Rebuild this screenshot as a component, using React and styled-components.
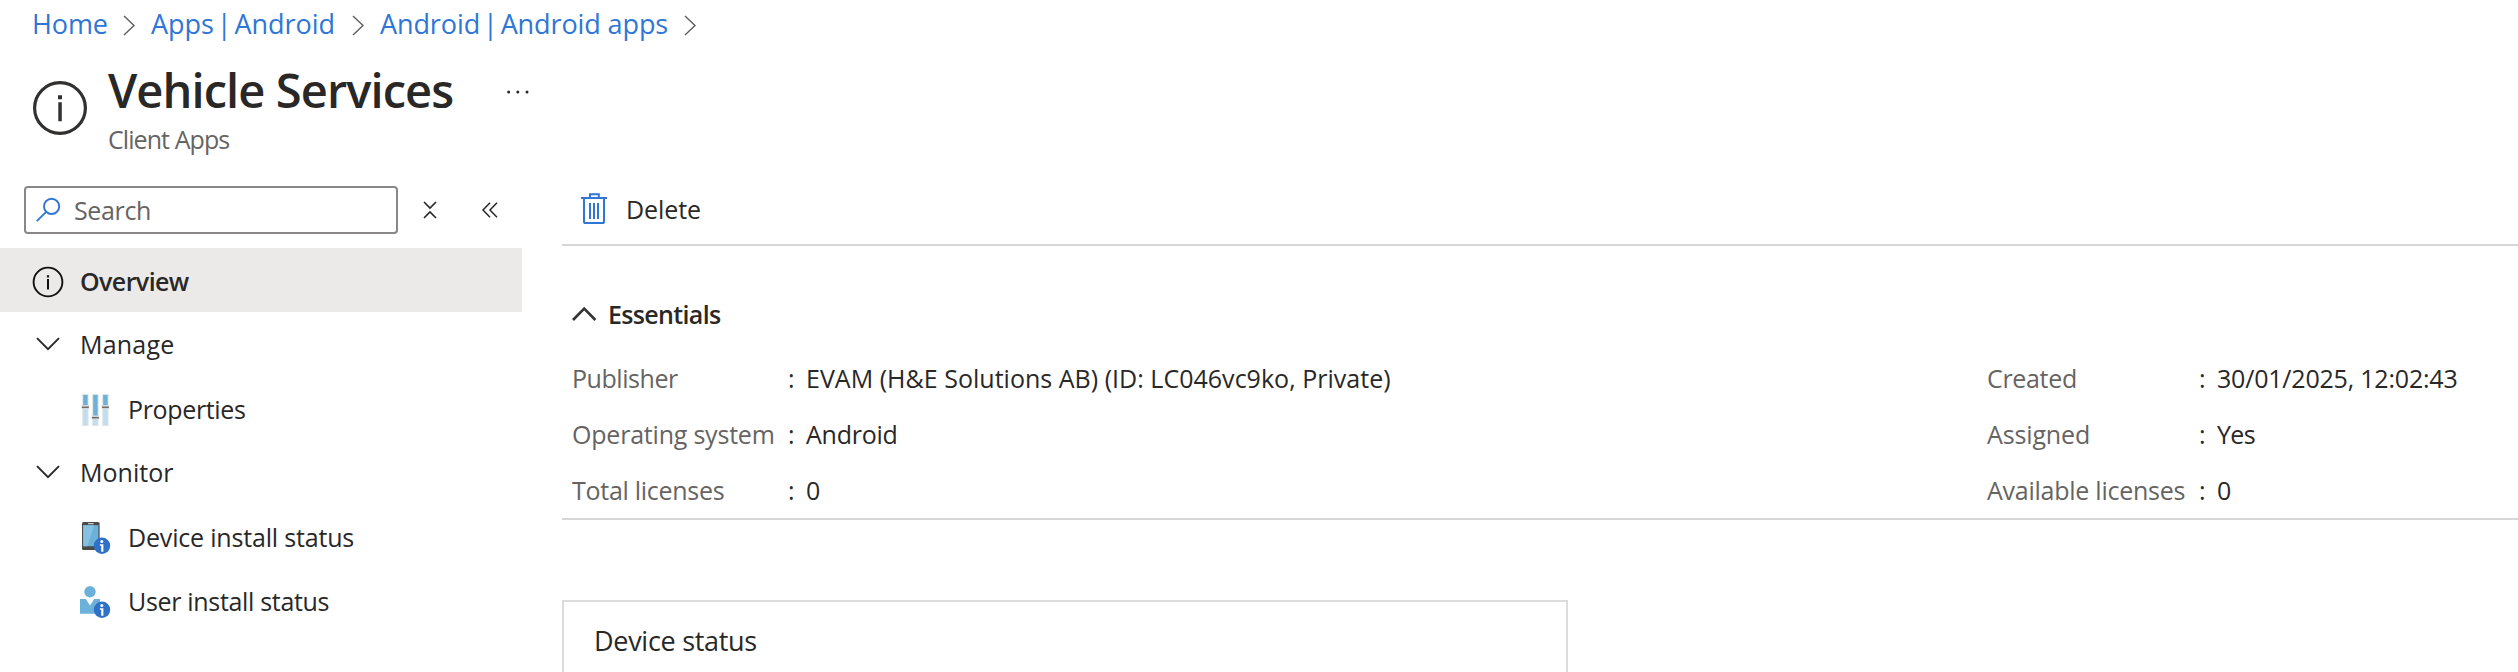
import React from "react";
import styled, { createGlobalStyle } from "styled-components";

const color = {
  text: "#292827",
  label: "#666462",
  link: "#2f76d6",
  line: "#d6d6d6",
  cardLine: "#dcdcdc",
  selected: "#ebeae9",
  azure: "#6bb1da",
  badge: "#2f70c8",
};

const GlobalStyle = createGlobalStyle`
  html, body { margin: 0; background: #fff; overflow: hidden; }
  * { box-sizing: border-box; }
  body {
    font-family: "Open Sans", "Noto Sans", sans-serif;
    font-size: 25px;
    line-height: 36px;
    color: ${color.text};
  }
`;

const Page = styled.div`
  height: 672px;
  overflow: hidden;
  display: flex;
  flex-direction: column;
`;

const Icon = styled.svg`
  display: block;
  flex: none;
  overflow: visible;
  fill: none;
`;

const Label = styled.span`
  white-space: nowrap;
  letter-spacing: ${(p) => p.$track || 0}px;
`;

/* Breadcrumb */

const Breadcrumb = styled.nav`
  display: flex;
  gap: 16px;
  height: 47px;
  padding-left: 32px;
  font-size: 27px;
`;

const Crumb = styled.div`
  display: flex;
  align-items: center;
  justify-content: space-between;
  width: ${(p) => p.$width}px;
`;

const CrumbLink = styled.a`
  color: ${color.link};
  white-space: nowrap;
  letter-spacing: ${(p) => p.$track}px;
`;

const Bar = styled.span`
  margin: 0 -4px;
`;

/* Blade header */

const Header = styled.header`
  display: flex;
  align-items: flex-start;
  height: 109px;
  padding: 13px 0 0 32px;
`;

const HeaderIcon = styled.div`
  width: 76px;
  padding-top: 20px;
`;

const TitleBlock = styled.div`
  width: 397px;
`;

const Title = styled.h1`
  margin: 0;
  font-size: 47px;
  font-weight: 600;
  line-height: 60px;
  letter-spacing: -0.91px;
  white-space: nowrap;
`;

const Subtitle = styled.div`
  padding-top: 1px;
  color: ${color.label};
  letter-spacing: -0.93px;
`;

const MoreButton = styled.div`
  padding-top: 29px;
`;

/* Sidebar */

const Body = styled.div`
  display: flex;
  flex: 1;
  padding-top: 30px;
`;

const Sidebar = styled.aside`
  width: 522px;
  flex: none;
`;

const SearchRow = styled.div`
  display: flex;
  align-items: center;
  height: 48px;
  margin: 0 0 14px 24px;
`;

const SearchBox = styled.div`
  display: flex;
  align-items: center;
  gap: 14px;
  width: 374px;
  height: 48px;
  padding: 0 0 1px 10px;
  border: 2px solid #8a8886;
  border-radius: 4px;
  color: ${color.label};
`;

const ToolButton = styled.div`
  margin-left: ${(p) => p.$gap}px;
`;

const NavItem = styled.div`
  display: flex;
  align-items: center;
  height: 64px;
  padding-left: ${(p) => (p.$nested ? 80 : 32)}px;
  padding-top: ${(p) => p.$drop || 0}px;
  background: ${(p) => (p.$selected ? color.selected : "transparent")};
  font-weight: ${(p) => (p.$selected ? 600 : 400)};
`;

const NavIcon = styled.div`
  display: flex;
  width: 48px;
  margin-top: ${(p) => p.$shift || 0}px;
`;

/* Main content */

const Main = styled.main`
  flex: 1;
  margin-left: 40px;
`;

const Toolbar = styled.div`
  display: flex;
  align-items: center;
  gap: 17px;
  height: 60px;
  padding: 0 0 12px 19px;
  border-bottom: 2px solid ${color.line};
`;

const EssentialsHeader = styled.div`
  display: flex;
  align-items: center;
  gap: 12px;
  height: 104px;
  padding: 34px 0 2px 10px;
  font-weight: 600;
`;

const EssentialsGrid = styled.div`
  display: grid;
  grid-template-columns: 1415px 1fr;
  padding-left: 10px;
  border-bottom: 2px solid ${color.line};
`;

const Field = styled.div`
  display: grid;
  grid-template-columns: ${(p) => (p.$side ? "212px 18px" : "216px 18px")} 1fr;
  align-items: center;
  height: 56px;
`;

const FieldName = styled(Label)`
  color: ${color.label};
`;

const Card = styled.section`
  width: 1006px;
  height: 72px;
  margin-top: 80px;
  padding: 21px 0 0 30px;
  border: 2px solid ${color.cardLine};
  border-bottom: 0;
  font-size: 27px;
`;

const ChevronRight = () => (
  <Icon width="12" height="20" viewBox="0 0 12 20" stroke="#605e5c" strokeWidth="1.4">
    <path d="M1 0.5 L11 10 L1 19.5" transform="translate(0 1.5)" />
  </Icon>
);

const ChevronDown = () => (
  <Icon width="32" height="16" viewBox="0 0 32 16" stroke="#292827" strokeWidth="1.9">
    <path d="M5 2.2 L16 13.2 L27 2.2" />
  </Icon>
);

const ChevronUp = () => (
  <Icon width="24" height="16" viewBox="0 0 24 16" stroke="#333" strokeWidth="2.6">
    <path d="M1 14 L12.2 2.6 L23.4 14" />
  </Icon>
);

const InfoLarge = () => (
  <Icon width="56" height="56" viewBox="0 0 56 56">
    <circle cx="28" cy="28" r="25.4" stroke="#323130" strokeWidth="3.2" />
    <path d="M26 15.3h4v4h-4zM26.3 22.3h3.5v19h-3.5z" fill="#323130" />
  </Icon>
);

const InfoSmall = () => (
  <Icon width="32" height="32" viewBox="0 0 32 32">
    <circle cx="16" cy="16" r="14.4" stroke="#111" strokeWidth="1.9" />
    <path d="M14.9 9.2h2.2v2.2h-2.2zM15 13h2v10.5h-2z" fill="#111" />
  </Icon>
);

const MoreDots = () => (
  <Icon width="24" height="6" viewBox="0 0 24 6">
    <g fill="#292827">
      <circle cx="3.6" cy="3" r="1.5" />
      <circle cx="12.8" cy="3" r="1.5" />
      <circle cx="22" cy="3" r="1.5" />
    </g>
  </Icon>
);

const SearchIcon = () => (
  <Icon width="24" height="24" viewBox="0 0 24 24" stroke={color.link} strokeWidth="1.9">
    <circle cx="15.6" cy="8.4" r="7.6" />
    <path d="M10.2 13.8 L0.8 23.2" />
  </Icon>
);

const CollapseGroups = () => (
  <Icon width="14" height="18" viewBox="0 0 14 18" stroke="#292827" strokeWidth="1.6">
    <path d="M1 1 L7 7 L13 1 M1 17 L7 11 L13 17" />
  </Icon>
);

const DoubleLeft = () => (
  <Icon width="16" height="16" viewBox="0 0 16 16" stroke="#292827" strokeWidth="1.5">
    <path d="M8 0.8 L1 8 L8 15.2 M15 0.8 L8 8 L15 15.2" />
  </Icon>
);

const TrashIcon = () => (
  <Icon width="28" height="32" viewBox="0 0 28 32" stroke={color.link} strokeWidth="2">
    <path d="M0 5h26M9 5V1.2h8.8V5M3 5v23.4q0 1.6 1.6 1.6h16.8q1.6 0 1.6-1.6V5M9 10v16M13 10v16M17 10v16" />
  </Icon>
);

const PropertiesIcon = () => (
  <Icon width="30" height="36" viewBox="0 0 30 36">
    {[
      [2.6, 17.2],
      [12.6, 27.6],
      [22.6, 17.2],
    ].map(([x, y]) => (
      <g key={x}>
        <rect x={x - 0.4} y="4" width="6.4" height="32" fill="#dfe3e5" />
        <rect x={x + 0.6} y="5" width="4.4" height="30" fill="#bfdff0" />
        <rect x={x + 0.6} y="5" width="4.4" height={y - 5} fill={color.azure} />
        <rect x={x - 1.1} y={y - 2.2} width="7.8" height="3.8" fill="#d5d5d5" />
        <rect x={x - 0.6} y={y - 0.6} width="6.8" height="1.4" fill="#6c6c6c" />
      </g>
    ))}
  </Icon>
);

const InfoBadge = () => (
  <g>
    <circle cx="22" cy="27.7" r="8.2" fill={color.badge} />
    <circle cx="21.8" cy="23.6" r="1.5" fill="#fff" />
    <path d="M19.9 26.3h3.5v7.4h-2.2v-6h-1.3z" fill="#fff" />
  </g>
);

const DeviceIcon = () => (
  <Icon width="30" height="36" viewBox="0 0 30 36">
    <rect x="2" y="4" width="17.6" height="28" rx="1.6" fill="#4a4a4b" />
    <rect x="3.2" y="7.2" width="15.2" height="21" fill={color.azure} />
    <path d="M3.2 7.2h11L7.4 28.2H3.2z" fill="#86c0e2" />
    <rect x="8" y="5.1" width="5.6" height="1.1" fill="#d8d8d8" />
    <InfoBadge />
  </Icon>
);

const UserIcon = () => (
  <Icon width="30" height="36" viewBox="0 0 30 36">
    <circle cx="10" cy="9.7" r="5.7" fill={color.azure} />
    <path d="M0 17h5.8L10 23.6 14.2 17H20v14.8H0z" fill={color.azure} />
    <InfoBadge />
  </Icon>
);

const crumbs = [
  { parts: ["Home"], width: 103, track: -0.1 },
  { parts: ["Apps ", " Android"], width: 213, track: -0.04 },
  { parts: ["Android ", " Android apps"], width: 316, track: -0.1 },
];

const navItems = [
  { text: "Overview", icon: InfoSmall, selected: true, track: -0.59, drop: 2, shift: 2 },
  { text: "Manage", icon: ChevronDown, track: 0.21 },
  { text: "Properties", icon: PropertiesIcon, nested: true, track: -0.35, drop: 2, shift: -2 },
  { text: "Monitor", icon: ChevronDown, track: 0.01 },
  { text: "Device install status", icon: DeviceIcon, nested: true, track: -0.18, drop: 2, shift: -2 },
  { text: "User install status", icon: UserIcon, nested: true, track: -0.32, drop: 2, shift: -2 },
];

const fields = [
  { name: "Publisher", track: -0.45, value: "EVAM (H&E Solutions AB) (ID: LC046vc9ko, Private)", valueTrack: 0.02 },
  { name: "Created", track: -0.32, value: "30/01/2025, 12:02:43", valueTrack: -0.2, side: true },
  { name: "Operating system", track: -0.21, value: "Android", valueTrack: -0.23 },
  { name: "Assigned", track: -0.13, value: "Yes", valueTrack: -0.66, side: true },
  { name: "Total licenses", track: -0.28, value: "0" },
  { name: "Available licenses", track: -0.25, value: "0", side: true },
];

export default function App() {
  return (
    <Page>
      <GlobalStyle />
      <Breadcrumb>
        {crumbs.map((c) => (
          <Crumb key={c.parts.join("|")} $width={c.width}>
            <CrumbLink $track={c.track}>
              {c.parts[0]}
              {c.parts[1] && <Bar>|</Bar>}
              {c.parts[1]}
            </CrumbLink>
            <ChevronRight />
          </Crumb>
        ))}
      </Breadcrumb>
      <Header>
        <HeaderIcon>
          <InfoLarge />
        </HeaderIcon>
        <TitleBlock>
          <Title>Vehicle Services</Title>
          <Subtitle>Client Apps</Subtitle>
        </TitleBlock>
        <MoreButton>
          <MoreDots />
        </MoreButton>
      </Header>
      <Body>
        <Sidebar>
          <SearchRow>
            <SearchBox>
              <SearchIcon />
              <Label $track={-0.35}>Search</Label>
            </SearchBox>
            <ToolButton $gap={25}>
              <CollapseGroups />
            </ToolButton>
            <ToolButton $gap={45}>
              <DoubleLeft />
            </ToolButton>
          </SearchRow>
          {navItems.map(({ icon: Glyph, ...item }) => (
            <NavItem key={item.text} $selected={item.selected} $nested={item.nested} $drop={item.drop}>
              <NavIcon $shift={item.shift}>
                <Glyph />
              </NavIcon>
              <Label $track={item.track}>{item.text}</Label>
            </NavItem>
          ))}
        </Sidebar>
        <Main>
          <Toolbar>
            <TrashIcon />
            <Label $track={-0.09}>Delete</Label>
          </Toolbar>
          <EssentialsHeader>
            <ChevronUp />
            <Label $track={-0.66}>Essentials</Label>
          </EssentialsHeader>
          <EssentialsGrid>
            {fields.map((f) => (
              <Field key={f.name} $side={f.side}>
                <FieldName $track={f.track}>{f.name}</FieldName>
                <span>:</span>
                <Label $track={f.valueTrack}>{f.value}</Label>
              </Field>
            ))}
          </EssentialsGrid>
          <Card>
            <Label $track={-0.29}>Device status</Label>
          </Card>
        </Main>
      </Body>
    </Page>
  );
}
